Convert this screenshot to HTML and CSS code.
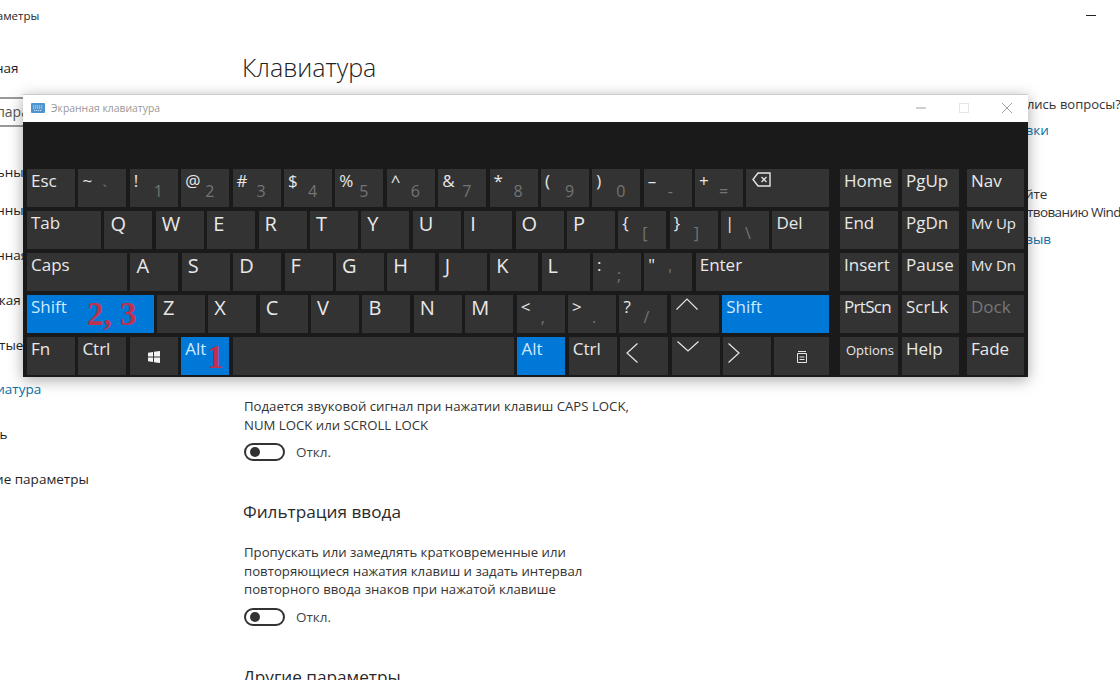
FILE: index.html
```html
<!DOCTYPE html>
<html lang="ru">
<head>
<meta charset="utf-8">
<title>Клавиатура</title>
<link rel="stylesheet" href="styles.css">
</head>
<body>
<header class="appbar"><span class="appname">Параметры</span><span class="app-min"></span></header>
<div class="content">
  <nav class="sidebar">
    <div class="home">Главная</div>
    <div class="search">Найти параметр</div>
    <div class="navhead">Специальные возможности</div>
    <div class="navitem">Экранный диктор</div>
    <div class="navitem">Экранная лупа</div>
    <div class="navitem">Высокая контрастность</div>
    <div class="navitem">Скрытые субтитры</div>
    <div class="navitem active">Клавиатура</div>
    <div class="navitem">Мышь</div>
    <div class="navitem">Другие параметры</div>
  </nav>
  <main class="main">
    <h1 class="title">Клавиатура</h1>
    <p class="para">Подается звуковой сигнал при нажатии клавиш CAPS LOCK, NUM LOCK или SCROLL LOCK</p>
    <div class="toggle-row"><span class="toggle"></span><span>Откл.</span></div>
    <h2 class="subtitle">Фильтрация ввода</h2>
    <p class="para para-top">Пропускать или замедлять кратковременные или повторяющиеся нажатия клавиш и задать интервал повторного ввода знаков при нажатой клавише</p>
    <div class="toggle-row"><span class="toggle"></span><span>Откл.</span></div>
    <h2 class="subtitle">Другие параметры</h2>
  </main>
  <aside class="aside">
    <p class="aside-line q">У вас появились вопросы?</p>
    <p class="aside-link">Вызов справки</p>
    <p class="aside-line gap">Содействуйте</p>
    <p class="aside-line imp">усовершенствованию Windows</p>
    <p class="aside-link fb">Оставить отзыв</p>
  </aside>
</div>

<section class="osk">
  <div class="osk-title">
    <svg class="osk-icon" width="14" height="10" viewBox="0 0 14 10"><rect width="14" height="10" rx="1" fill="#4f94cf"/><path d="M2 3h10M2 5h10M3 7.5h8" stroke="#cfe3f4" stroke-width="1" stroke-dasharray="1.2 .8"/></svg>
    <span class="osk-name">Экранная клавиатура</span>
    <span class="win-btns">
      <svg width="10" height="10" viewBox="0 0 10 10"><path d="M0 5h10" stroke="#a0a0a0"/></svg>
      <svg width="10" height="10" viewBox="0 0 10 10"><rect x=".5" y=".5" width="9" height="9" fill="none" stroke="#e6e6e6"/></svg>
      <svg width="10" height="10" viewBox="0 0 10 10"><path d="M0 0l10 10M10 0L0 10" stroke="#a0a0a0"/></svg>
    </span>
  </div>
  <div class="osk-display"></div>
  <div class="keyboard">
    <div class="keys-main">
      <div class="row">
        <div class="key"><b>Esc</b></div>
        <div class="key"><b>~</b><i>`</i></div>
        <div class="key"><b>!</b><i>1</i></div>
        <div class="key"><b>@</b><i>2</i></div>
        <div class="key"><b>#</b><i>3</i></div>
        <div class="key"><b>$</b><i>4</i></div>
        <div class="key"><b>%</b><i>5</i></div>
        <div class="key"><b>^</b><i>6</i></div>
        <div class="key"><b>&amp;</b><i>7</i></div>
        <div class="key"><b>*</b><i>8</i></div>
        <div class="key"><b>(</b><i>9</i></div>
        <div class="key"><b>)</b><i>0</i></div>
        <div class="key"><b>–</b><i>-</i></div>
        <div class="key"><b>+</b><i>=</i></div>
        <div class="key grow"><svg class="ico-bksp" width="19" height="15" viewBox="0 0 19 15"><path d="M6 1h12v13H6L1 7.5z" fill="none" stroke="#e6e6e6" stroke-width="1.4"/><path d="M9.5 5l5 5M14.5 5l-5 5" stroke="#e6e6e6" stroke-width="1.3"/></svg></div>
      </div>
      <div class="row">
        <div class="key w-tab"><b>Tab</b></div>
        <div class="key big"><b>Q</b></div>
        <div class="key big"><b>W</b></div>
        <div class="key big"><b>E</b></div>
        <div class="key big"><b>R</b></div>
        <div class="key big"><b>T</b></div>
        <div class="key big"><b>Y</b></div>
        <div class="key big"><b>U</b></div>
        <div class="key big"><b>I</b></div>
        <div class="key big"><b>O</b></div>
        <div class="key big"><b>P</b></div>
        <div class="key"><b>{</b><i>[</i></div>
        <div class="key"><b>}</b><i>]</i></div>
        <div class="key"><b>|</b><i>\</i></div>
        <div class="key grow"><b>Del</b></div>
      </div>
      <div class="row">
        <div class="key w-caps"><b>Caps</b></div>
        <div class="key big"><b>A</b></div>
        <div class="key big"><b>S</b></div>
        <div class="key big"><b>D</b></div>
        <div class="key big"><b>F</b></div>
        <div class="key big"><b>G</b></div>
        <div class="key big"><b>H</b></div>
        <div class="key big"><b>J</b></div>
        <div class="key big"><b>K</b></div>
        <div class="key big"><b>L</b></div>
        <div class="key"><b>:</b><i>;</i></div>
        <div class="key"><b>"</b><i>'</i></div>
        <div class="key grow"><b>Enter</b></div>
      </div>
      <div class="row">
        <div class="key w-shift on"><b>Shift</b><span class="mark mark-shift">2, 3</span></div>
        <div class="key big"><b>Z</b></div>
        <div class="key big"><b>X</b></div>
        <div class="key big"><b>C</b></div>
        <div class="key big"><b>V</b></div>
        <div class="key big"><b>B</b></div>
        <div class="key big"><b>N</b></div>
        <div class="key big"><b>M</b></div>
        <div class="key"><b>&lt;</b><i>,</i></div>
        <div class="key"><b>&gt;</b><i>.</i></div>
        <div class="key"><b>?</b><i>/</i></div>
        <div class="key"><svg class="ico-up" width="22" height="12" viewBox="0 0 22 12"><path d="M.5 11.500L11 1l10.500 10.500" fill="none" stroke="#e6e6e6" stroke-width="1.2"/></svg></div>
        <div class="key grow on"><b>Shift</b></div>
      </div>
      <div class="row">
        <div class="key"><b>Fn</b></div>
        <div class="key"><b>Ctrl</b></div>
        <div class="key center"><svg width="12" height="12" viewBox="0 0 12 12"><path d="M0 1.700l5-.7v4.600H0zM6 .8l6-.8v5.600H6zM0 6.400h5V11l-5-.7zM6 6.400h6V12l-6-.8z" fill="#f2f2f2"/></svg></div>
        <div class="key on"><b>Alt</b><span class="mark mark-alt">1</span></div>
        <div class="key grow"></div>
        <div class="key on"><b>Alt</b></div>
        <div class="key"><b>Ctrl</b></div>
        <div class="key"><svg class="ico-left" width="12" height="20" viewBox="0 0 12 20"><path d="M11.500 .5L1 10l10.500 9.500" fill="none" stroke="#e6e6e6" stroke-width="1.2"/></svg></div>
        <div class="key"><svg class="ico-down" width="22" height="11" viewBox="0 0 22 11"><path d="M.5 .5L11 10 21.500 .5" fill="none" stroke="#e6e6e6" stroke-width="1.2"/></svg></div>
        <div class="key"><svg class="ico-right" width="12" height="20" viewBox="0 0 12 20"><path d="M.5 .5L11 10 .5 19.500" fill="none" stroke="#e6e6e6" stroke-width="1.2"/></svg></div>
        <div class="key w-menu center"><svg class="ico-menu" width="10" height="12" viewBox="0 0 10 12"><path d="M.5 2.500h9v9h-9z" fill="none" stroke="#e6e6e6"/><path d="M1 .5h8M2.500 6h5M2.500 8.500h5" stroke="#e6e6e6"/></svg></div>
      </div>
    </div>
    <div class="keys-side">
      <div class="key"><b>Home</b></div>
      <div class="key"><b>PgUp</b></div>
      <div class="key"><b>Nav</b></div>
      <div class="key"><b>End</b></div>
      <div class="key"><b>PgDn</b></div>
      <div class="key small"><b>Mv Up</b></div>
      <div class="key"><b>Insert</b></div>
      <div class="key"><b>Pause</b></div>
      <div class="key small"><b>Mv Dn</b></div>
      <div class="key tight"><b>PrtScn</b></div>
      <div class="key"><b>ScrLk</b></div>
      <div class="key dim"><b>Dock</b></div>
      <div class="key tiny"><b>Options</b></div>
      <div class="key"><b>Help</b></div>
      <div class="key"><b>Fade</b></div>
    </div>
  </div>
</section>
</body>
</html>
```
FILE: styles.css
```css
* { box-sizing: border-box; }
html, body { margin: 0; height: 680px; overflow: hidden; }
body {
  position: relative;
  background: #fff;
  color: #1f1f1f;
  font-family: "Open Sans", "Noto Sans", sans-serif;
  font-size: 13.5px;
}
p, h1, h2 { margin: 0; font-weight: 400; }

.appbar {
  display: flex;
  justify-content: space-between;
  align-items: center;
  height: 30px;
  margin-left: -25px;
  font-size: 11.5px;
}
.app-min { width: 10px; height: 1px; background: #222; margin-right: 24px; }

.content { display: grid; grid-template-columns: 277px 708px 300px; margin-left: -35px; }

.sidebar { display: flex; flex-direction: column; white-space: nowrap; }
.home { margin-top: 29px; line-height: 18px; }
.search {
  width: 260px;
  height: 30px;
  margin: 20px 0 0 -25px;
  padding-left: 8px;
  border: 2px solid #999;
  line-height: 26px;
  font-size: 14px;
  color: #555;
}
.navhead { margin: 36px 0 0 -25px; line-height: 18px; }
.navitem { margin-top: 20px; line-height: 18px; height: 25px; }
.active { color: #0a6fa8; margin-top: 19px; }

.main { padding-top: 19px; }
.title { font-size: 25px; font-weight: 300; line-height: 36px; margin-bottom: 312px; color: #222; }
.para { width: 400px; margin-left: 2px; line-height: 18.7px; color: #333; font-size: 13.2px; }
.para-top { margin-top: 18.500px; }
.toggle-row { display: flex; align-items: center; gap: 11px; height: 18px; margin: 9px 0 0 2px; color: #444; }
.toggle { position: relative; width: 41px; height: 18px; border: 2px solid #333; border-radius: 9px; }
.toggle::before {
  content: "";
  position: absolute;
  left: 4px;
  top: 2px;
  width: 10px;
  height: 10px;
  border-radius: 50%;
  background: #333;
}
.subtitle { margin: 39px 0 0 1px; font-size: 17.2px; line-height: 24px; color: #2a2a2a; }

.aside { padding-top: 65px; white-space: nowrap; color: #333; line-height: 18px; }
.aside-link { margin-top: 8px; color: #0a6fa8; }
.q { font-size: 13px; margin-left: 2.400px; }
.gap { margin: 46px 0 0 7px; }
.imp { margin-left: 3.500px; letter-spacing: -.6px; }
.fb { margin: 9px 0 0 -3px; }

.osk {
  position: absolute;
  left: 23px;
  top: 94px;
  width: 1005px;
  height: 283px;
  background: #1a1a1a;
  box-shadow: 0 3px 14px rgba(0, 0, 0, .35);
}
.osk-title {
  display: flex;
  align-items: center;
  height: 28px;
  padding: 0 0 2px 8px;
  background: #fff;
  border-top: 1px solid #ccc;
}
.osk-name { margin-left: 6px; font-size: 10.400px; color: #999; }
.win-btns { display: flex; gap: 33px; margin-left: auto; margin-right: 16px; }
.osk-display { height: 47px; }

.keyboard { display: flex; gap: 11px; padding-left: 4px; }
.keys-main { display: flex; flex-direction: column; gap: 3.900px; width: 802px; }
.row { display: flex; gap: 3.400px; }
.keys-side {
  display: grid;
  grid-template-columns: 58px 57px 61px;
  grid-auto-rows: 38px;
  column-gap: 4px;
  row-gap: 3.900px;
}
.keys-side > :nth-child(3n) { margin-left: 4px; }

.key {
  position: relative;
  display: grid;
  grid-template-columns: 20px 1fr;
  flex: 0 0 48px;
  height: 38px;
  padding-left: 4px;
  background: #333;
  color: #e8e8e8;
}
.key b {
  grid-column: 1;
  font-weight: 400;
  font-size: 17px;
  line-height: 24px;
  white-space: nowrap;
}
.key i {
  grid-column: 2;
  font-style: normal;
  font-size: 16px;
  line-height: 20px;
  padding-top: 12px;
  color: #747474;
}
.key svg { display: block; }
.big b { font-size: 20px; line-height: 26px; padding-left: 2px; }
.small b { font-size: 15px; }
.tiny b { font-size: 13px; line-height: 26px; padding-left: 2px; }
.tight b { letter-spacing: -.7px; }
.dim b { color: #777; }
.w-tab { flex-basis: 74px; }
.w-caps { flex-basis: 100px; }
.w-shift { flex-basis: 126.500px; }
.w-menu { flex-basis: 54.600px; }
.grow { flex: 1 1 0; }
.on { background: #0078d7; }
.on b { color: #cfeaff; }
.center { display: flex; justify-content: center; align-items: center; padding: 2px 0 0; }

.ico-bksp { margin: 3px 0 0 2px; }
.ico-up { margin: 3px 0 0 1px; }
.ico-down { margin: 4px 0 0 1px; }
.ico-left, .ico-right { margin: 6px 0 0 2px; }
.ico-right { margin-left: 1px; }

.mark {
  position: absolute;
  font-family: "Liberation Serif", serif;
  font-weight: 700;
  font-size: 33px;
  line-height: 32px;
  color: #c2304f;
  white-space: nowrap;
}
.mark-shift { left: 60px; top: 3px; }
.mark-alt { left: 26px; top: 4px; }
```
